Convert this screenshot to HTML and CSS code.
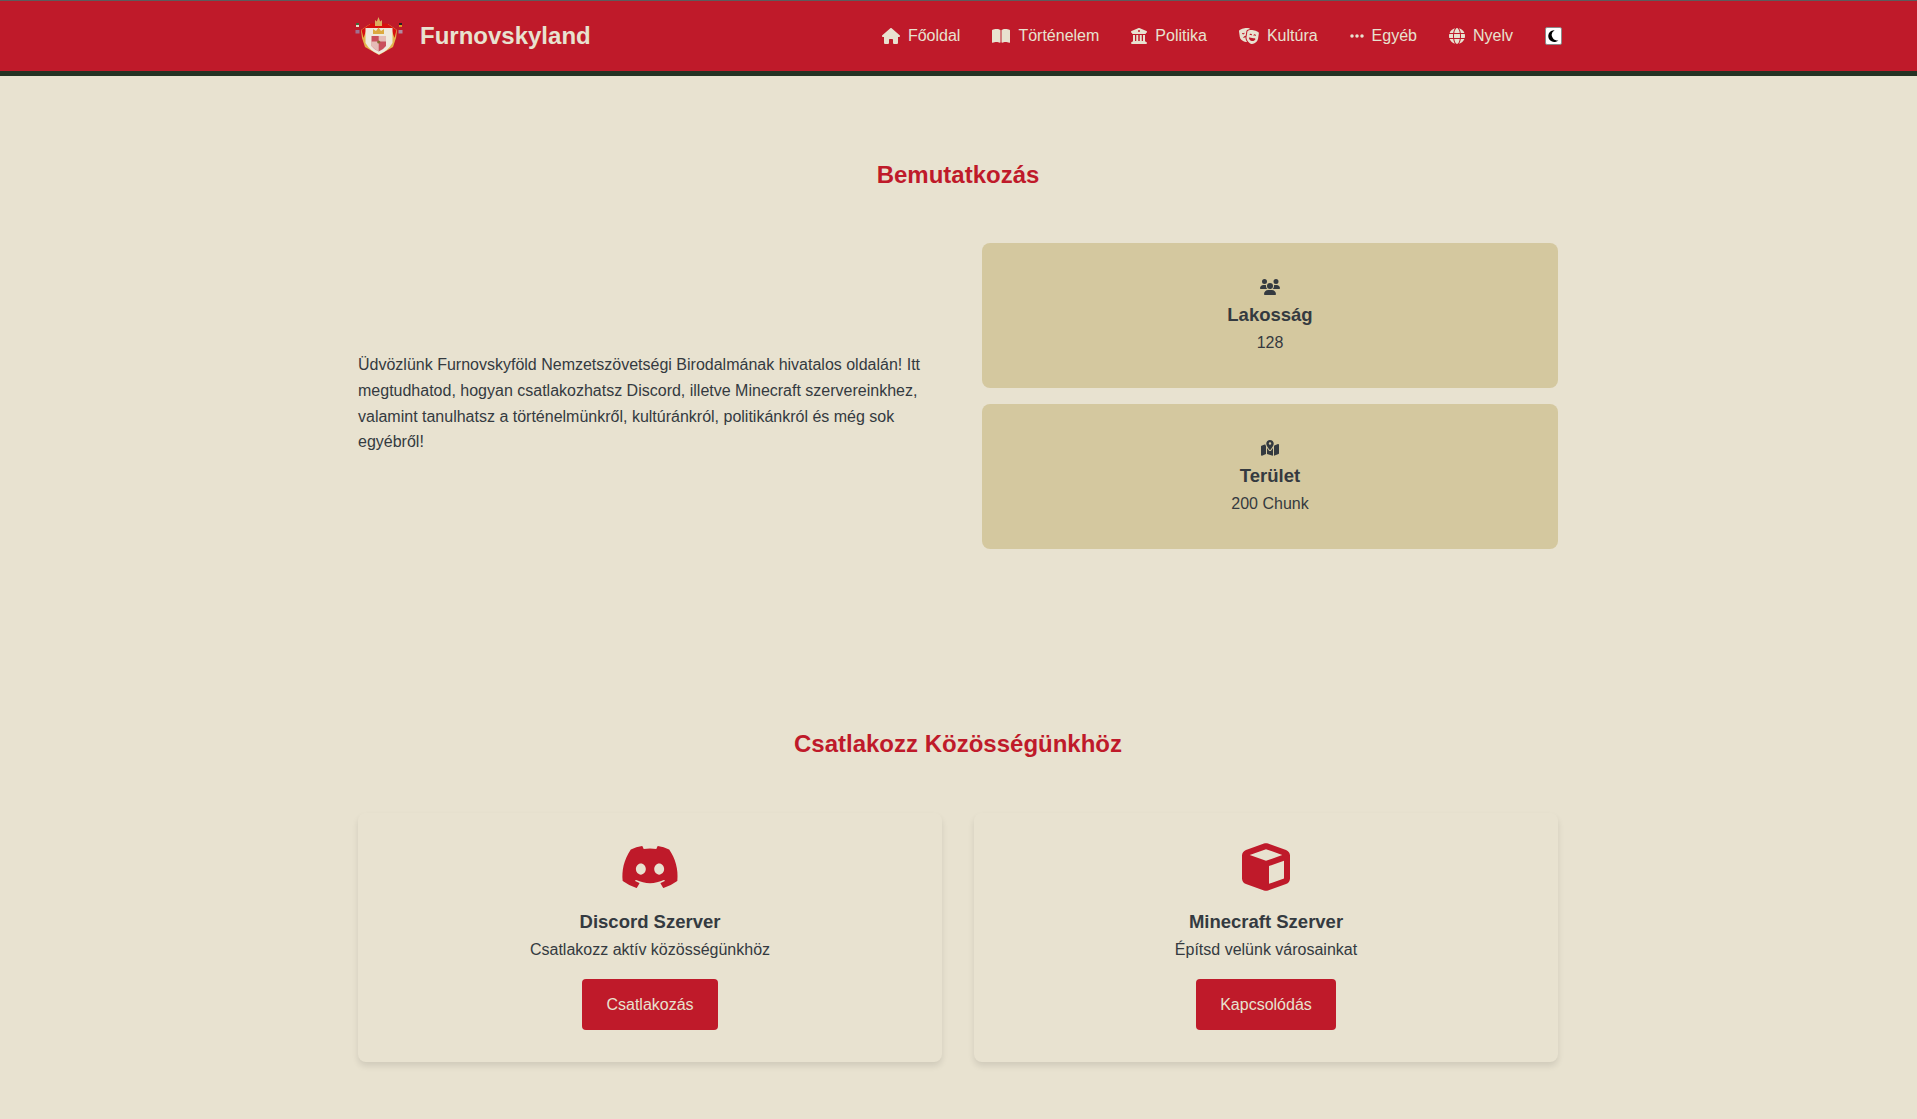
FILE: index.html
```html
<!DOCTYPE html>
<html lang="hu">
<head>
	<meta charset="UTF-8">
	<meta name="viewport" content="width=device-width, initial-scale=1.0">
	<title>Furnovskyland</title>
	<link rel="stylesheet" href="styles.css">
</head>
<body>
	<header class="site-header">
		<div class="header-inner">
			<a class="brand" href="#">
				<svg class="brand-logo" viewBox="0 0 48 38">
					<rect x="1" y="6" width="3" height="2" fill="#3f6b3c"/>
					<rect x="1" y="8" width="3" height="2" fill="#e8dcc8"/>
					<rect x="0.5" y="13" width="4" height="3.5" fill="#a07090"/>
					<rect x="44" y="6" width="3" height="2" fill="#222"/>
					<rect x="44" y="8" width="3" height="2" fill="#e09a20"/>
					<rect x="43.5" y="13" width="4" height="3.5" fill="#b08aa0"/>
					<path d="M6 13 L15 7 H33 L42 13 L41 21 L38 30 L31 34 L24 38 L17 34 L10 30 L7 21 Z" fill="#e3b44a"/>
					<path d="M6.5 13 L16 6.5 H32 L41.5 13 L39.5 21 L37 14 L11 14 L8.5 21 Z" fill="#d8100f"/>
					<path d="M10.5 11 H37.5 V26 Q33 34 24 37.5 Q15 34 10.5 26 Z" fill="#efe9dd"/>
					<path d="M20 3 L21.8 4.5 L23.5 0 L25.2 4.5 L27 3 L27 9 H20 Z" fill="#dcb060"/>
					<path d="M18 12 L21 14 L23.5 10.5 L26 14 L29 12 V17 H18 Z" fill="#dcaa40"/>
					<path d="M16.5 19 H31 V29 Q28 33 23.7 34.5 Q19.5 33 16.5 29 Z" fill="#c9505c"/>
					<path d="M23.7 19 H31 V24.5 H16.5 V29 Q20 33 23.7 34.5 Z" fill="#efe9dd" opacity="0.7"/>
					<circle cx="23.7" cy="25" r="1.6" fill="#8a6a30"/>
				</svg>
				<span class="brand-name">Furnovskyland</span>
			</a>
			<nav class="main-nav">
				<a href="#"><svg viewBox="0 0 576 512" class="nav-icon"><path d="M575.8 255.5c0 18-15 32.1-32 32.1h-32l.7 160.2c0 2.7-.2 5.4-.5 8.1V472c0 22.1-17.9 40-40 40H456c-1.1 0-2.2 0-3.3-.1c-1.4 .1-2.8 .1-4.2 .1H416 392c-22.1 0-40-17.9-40-40V448 384c0-17.7-14.3-32-32-32H256c-17.7 0-32 14.3-32 32v64 24c0 22.1-17.9 40-40 40H160 128.1c-1.5 0-3-.1-4.5-.2c-1.2 .1-2.4 .2-3.6 .2H104c-22.1 0-40-17.9-40-40V360c0-.9 0-1.9 .1-2.8V287.6H32c-18 0-32-14-32-32.1c0-9 3-17 10-24L266.4 8c7-7 15-8 22-8s15 2 21 7L564.8 231.5c8 7 12 15 11 24z"/></svg>Főoldal</a>
				<a href="#"><svg viewBox="0 0 576 512" class="nav-icon"><path d="M249.6 471.5c10.8 3.8 22.4-4.1 22.4-15.5V78.6c0-4.2-1.6-8.4-5-11C247.4 52 202.4 32 144 32C93.5 32 46.3 45.3 18.1 56.1C6.8 60.5 0 71.7 0 83.8V454.1c0 11.9 12.8 20.2 24.1 16.5C55.6 460.1 105.5 448 144 448c33.9 0 79 14 105.6 23.5zm76.8 0C353 462 398.1 448 432 448c38.5 0 88.4 12.1 119.9 22.6c11.3 3.8 24.1-4.6 24.1-16.5V83.8c0-12.1-6.8-23.3-18.1-27.6C529.7 45.3 482.5 32 432 32c-58.4 0-103.4 20-123 35.6c-3.3 2.6-5 6.8-5 11V456c0 11.4 11.7 19.3 22.4 15.5z"/></svg>Történelem</a>
				<a href="#"><svg viewBox="0 0 512 512" class="nav-icon"><path d="M243.4 2.6l-224 96c-14 6-21.8 21-18.7 35.8S16.8 160 32 160v8c0 13.3 10.7 24 24 24H456c13.3 0 24-10.7 24-24v-8c15.2 0 28.3-10.7 31.3-25.6s-4.8-29.9-18.7-35.8l-224-96c-8-3.4-17.2-3.4-25.2 0zM128 224H64V420.3c-.6 .3-1.2 .7-1.8 1.1l-48 32c-11.7 7.8-17 22.4-12.9 35.9S17.9 512 32 512H480c14.1 0 26.5-9.2 30.6-22.7s-1.1-28.1-12.9-35.9l-48-32c-.6-.4-1.2-.7-1.8-1.1V224H384V416H344V224H280V416H232V224H168V416H128V224zM256 64a32 32 0 1 1 0 64 32 32 0 1 1 0-64z"/></svg>Politika</a>
				<a href="#"><svg viewBox="0 0 640 512" class="nav-icon"><path d="M74.6 373.2c41.7 36.1 108 82.5 166.1 73.7c6.1-.9 12.1-2.5 18-4.5c-9.2-12.3-17.3-24.4-24.2-35.4c-21.9-35-28.8-75.2-25.9-113.6c-20.6 4.1-39.2 13-54.7 25.4c-6.5 5.2-16.3 1.3-14.8-7c6.4-33.5 33-60.9 68.2-66.3c2.6-.4 5.3-.7 7.9-.8l19.4-131.3c2-13.8 8-32.7 25-45.9C278.2 53.2 310.5 37 363.2 32.2c-.8-.7-1.6-1.4-2.4-2.1C340.6 14.5 288.4-11.5 175.7 5.6S20.5 63 5.7 83.9C0 91.9-.8 102 .6 111.8L24.8 276.1c5.5 37.3 21.5 72.6 49.8 97.2zm87.7-219.6c4.4-3.1 10.8-2 11.8 3.3c.1 .5 .2 1.1 .3 1.6c3.2 21.8-11.6 42-33.1 45.3s-41.5-11.8-44.7-33.5c-.1-.5-.1-1.1-.2-1.6c-.6-5.4 5.2-8.4 10.3-6.7c9 3 18.8 3.9 28.7 2.4s19.1-5.3 26.8-10.8zM261.6 390c29.4 46.9 79.5 110.9 137.6 119.7s124.5-37.5 162.2-72.7c27.6-25.8 43.8-60.8 49.2-97.9l24.2-164.3c1.4-9.8 .6-19.9-5.1-27.9c-14.8-20.9-57.3-61.2-170-78.3S299.4 77.2 279.2 92.8c-7.8 6-11.5 15.4-12.9 25.2L242.1 282.3c-5.5 37-.4 75.8 19.6 107.7zM404.5 235.3c-7.7-5.5-16.8-9.3-26.8-10.8s-19.8-.6-28.7 2.4c-5.1 1.7-10.9-1.3-10.3-6.7c.1-.5 .1-1.1 .2-1.6c3.2-21.8 23.2-36.8 44.7-33.5s36.3 23.5 33.1 45.3c-.1 .5-.2 1.1-.3 1.6c-1 5.3-7.4 6.4-11.8 3.3zm136.2 15.5c-1 5.3-7.4 6.4-11.8 3.3c-7.7-5.5-16.8-9.3-26.8-10.8s-19.8-.6-28.7 2.4c-5.1 1.7-10.9-1.3-10.3-6.7c.1-.5 .1-1.1 .2-1.6c3.2-21.8 23.2-36.8 44.7-33.5s36.3 23.5 33.1 45.3c-.1 .5-.2 1.1-.3 1.6zM530 350.1c-19.6 44.7-66.8 72.5-116.8 64.9s-87.1-47.7-96.9-95.4c-2-9.7 8.2-16.8 17.9-14.8c25.7 5.3 57.7 10.3 84.4 14.4s59.2 8.9 84.6 10.7c9.8 .7 18.8 8.4 14.8 17.2z"/></svg>Kultúra</a>
				<a href="#"><svg viewBox="0 0 448 512" class="nav-icon"><path d="M8 256a56 56 0 1 1 112 0A56 56 0 1 1 8 256zm160 0a56 56 0 1 1 112 0 56 56 0 1 1 -112 0zm216-56a56 56 0 1 1 0 112 56 56 0 1 1 0-112z"/></svg>Egyéb</a>
				<a href="#"><svg viewBox="0 0 512 512" class="nav-icon"><path d="M352 256c0 22.2-1.2 43.6-3.3 64H163.3c-2.2-20.4-3.3-41.8-3.3-64s1.2-43.6 3.3-64H348.7c2.2 20.4 3.3 41.8 3.3 64zm28.8-64H503.9c5.3 20.5 8.1 41.9 8.1 64s-2.8 43.5-8.1 64H380.8c2.1-20.6 3.2-42 3.2-64s-1.1-43.4-3.2-64zm112.6-32H376.7c-10-63.9-29.8-117.4-55.3-151.6c78.3 20.7 142 77.5 172.1 151.6zm-149.1 0H167.7c6.1-36.4 15.5-68.6 27-94.7c10.5-23.6 22.2-40.7 33.5-51.5C239.4 3.2 248.7 0 256 0s16.6 3.2 27.8 13.8c11.3 10.8 23 27.9 33.5 51.5c11.6 26 20.9 58.2 27 94.7zm-209 0H18.6C48.6 85.9 112.2 29.1 190.6 8.4C165.1 42.6 145.3 96.1 135.3 160zM8.1 192H131.2c-2.1 20.6-3.2 42-3.2 64s1.1 43.4 3.2 64H8.1C2.8 299.5 0 278.1 0 256s2.8-43.5 8.1-64zM194.7 446.6c-11.6-26-20.9-58.2-27-94.6H344.3c-6.1 36.4-15.5 68.6-27 94.6c-10.5 23.6-22.2 40.7-33.5 51.5C272.6 508.8 263.3 512 256 512s-16.6-3.2-27.8-13.8c-11.3-10.8-23-27.9-33.5-51.5zM135.3 352c10 63.9 29.8 117.4 55.3 151.6C112.2 482.9 48.6 426.1 18.6 352H135.3zm358.1 0c-30 74.1-93.6 130.9-171.9 151.6c25.5-34.2 45.2-87.7 55.3-151.6H493.4z"/></svg>Nyelv</a>
				<span class="theme-toggle"><svg viewBox="0 0 15 16"><path d="M8.6 2.2 A5.9 5.9 0 1 0 12.4 12.2 A5.4 5.4 0 0 1 8.6 2.2 Z" fill="#000"/></svg></span>
			</nav>
		</div>
	</header>

	<main class="container">
		<section class="intro">
			<h2 class="section-title">Bemutatkozás</h2>
			<div class="intro-grid">
				<p class="intro-text">Üdvözlünk Furnovskyföld Nemzetszövetségi Birodalmának hivatalos oldalán! Itt megtudhatod, hogyan csatlakozhatsz Discord, illetve Minecraft szervereinkhez, valamint tanulhatsz a történelmünkről, kultúránkról, politikánkról és még sok egyébről!</p>
				<div class="stats">
					<div class="stat-card">
						<svg viewBox="0 0 640 512" class="stat-icon"><path d="M144 0a80 80 0 1 1 0 160A80 80 0 1 1 144 0zM512 0a80 80 0 1 1 0 160A80 80 0 1 1 512 0zM0 298.7C0 239.8 47.8 192 106.7 192h42.7c15.9 0 31 3.5 44.6 9.7c-1.3 7.2-1.9 14.7-1.9 22.3c0 38.2 16.8 72.5 43.3 96c-.2 0-.4 0-.7 0H21.3C9.6 320 0 310.4 0 298.7zM405.3 320c-.2 0-.4 0-.7 0c26.6-23.5 43.3-57.8 43.3-96c0-7.6-.7-15-1.9-22.3c13.6-6.3 28.7-9.7 44.6-9.7h42.7C592.2 192 640 239.8 640 298.7c0 11.8-9.6 21.3-21.3 21.3H405.3zM224 224a96 96 0 1 1 192 0 96 96 0 1 1 -192 0zM128 485.3C128 411.7 187.7 352 261.3 352H378.7C452.3 352 512 411.7 512 485.3c0 14.7-11.9 26.7-26.7 26.7H154.7c-14.7 0-26.7-11.9-26.7-26.7z"/></svg>
						<h3>Lakosság</h3>
						<p>128</p>
					</div>
					<div class="stat-card">
						<svg viewBox="0 0 576 512" class="stat-icon"><path d="M408 120c0 54.6-73.1 151.9-105.2 192c-7.7 9.6-22 9.6-29.6 0C241.1 271.9 168 174.6 168 120C168 53.7 221.7 0 288 0s120 53.7 120 120zm8 80.4c3.5-6.9 6.7-13.8 9.6-20.6c.5-1.2 1-2.5 1.5-3.7l116-46.4C558.9 123.4 576 135 576 152V422.8c0 9.8-6 18.6-15.1 22.3L416 503V200.4zM137.6 138.3c2.4 14.1 7.2 28.3 12.8 41.5c2.9 6.8 6.1 13.7 9.6 20.6V451.8L32.9 502.7C17.1 509 0 497.4 0 480.4V209.6c0-9.8 6-18.6 15.1-22.3l122.6-49zM327.8 332c13.9-17.4 35.7-45.7 56.2-77V504.3L192 449.4V255c20.5 31.3 42.3 59.6 56.2 77c20.5 25.6 59.1 25.6 79.6 0zM288 152a40 40 0 1 0 0-80 40 40 0 1 0 0 80z"/></svg>
						<h3>Terület</h3>
						<p>200 Chunk</p>
					</div>
				</div>
			</div>
		</section>

		<section class="join">
			<h2 class="section-title">Csatlakozz Közösségünkhöz</h2>
			<div class="join-grid">
				<div class="join-card">
					<svg viewBox="0 0 640 512" class="join-icon"><path d="M524.531,69.836a1.5,1.5,0,0,0-.764-.7A485.065,485.065,0,0,0,404.081,32.03a1.816,1.816,0,0,0-1.923.91,337.461,337.461,0,0,0-14.9,30.6,447.848,447.848,0,0,0-134.426,0,309.541,309.541,0,0,0-15.135-30.6,1.89,1.89,0,0,0-1.924-.91A483.689,483.689,0,0,0,116.085,69.137a1.712,1.712,0,0,0-.788.676C39.068,183.651,18.186,294.69,28.43,404.354a2.016,2.016,0,0,0,.765,1.375A487.666,487.666,0,0,0,176.02,479.918a1.9,1.9,0,0,0,2.063-.676A348.2,348.2,0,0,0,208.12,430.4a1.86,1.86,0,0,0-1.019-2.588,321.173,321.173,0,0,1-45.868-21.853,1.885,1.885,0,0,1-.185-3.126c3.082-2.309,6.166-4.711,9.109-7.137a1.819,1.819,0,0,1,1.9-.256c96.229,43.917,200.41,43.917,295.5,0a1.812,1.812,0,0,1,1.924.233c2.944,2.426,6.027,4.851,9.132,7.16a1.884,1.884,0,0,1-.162,3.126,301.407,301.407,0,0,1-45.89,21.83,1.875,1.875,0,0,0-1,2.611,391.055,391.055,0,0,0,30.014,48.815,1.864,1.864,0,0,0,2.063.7A486.048,486.048,0,0,0,610.7,405.729a1.882,1.882,0,0,0,.765-1.352C623.729,277.594,590.933,167.465,524.531,69.836ZM222.491,337.58c-28.972,0-52.844-26.587-52.844-59.239S193.056,219.1,222.491,219.1c29.665,0,53.306,26.82,52.843,59.239C275.334,310.993,251.924,337.58,222.491,337.58Zm195.38,0c-28.971,0-52.843-26.587-52.843-59.239S388.437,219.1,417.871,219.1c29.667,0,53.307,26.82,52.844,59.239C470.715,310.993,447.538,337.58,417.871,337.58Z"/></svg>
					<h3>Discord Szerver</h3>
					<p>Csatlakozz aktív közösségünkhöz</p>
					<a class="btn" href="#">Csatlakozás</a>
				</div>
				<div class="join-card">
					<svg viewBox="0 0 512 512" class="join-icon"><path d="M234.5 5.7c13.9-5 29.1-5 43.1 0l192 68.6C495 83.4 512 107.5 512 134.6V377.4c0 27-17 51.2-42.5 60.3l-192 68.6c-13.9 5-29.1 5-43.1 0l-192-68.6C17 428.6 0 404.5 0 377.4V134.6c0-27 17-51.2 42.5-60.3l192-68.6zM256 66L82.3 128 256 190l173.7-62L256 66zm32 368.6l160-57.1v-188L288 246.6V434.6z"/></svg>
					<h3>Minecraft Szerver</h3>
					<p>Építsd velünk városainkat</p>
					<a class="btn" href="#">Kapcsolódás</a>
				</div>
			</div>
		</section>
	</main>
</body>
</html>
```

FILE: styles.css
```css
* {
	box-sizing: border-box;
}
body {
	margin: 0;
	padding-right: 1px;
	background: #e8e2d0;
	color: #343a40;
	font-family: "Liberation Sans", Arial, sans-serif;
	font-size: 16px;
	line-height: 1.6;
}
a {
	color: inherit;
	text-decoration: none;
}
.site-header {
	height: 76px;
	margin-right: -1px;
	padding-right: 1px;
	background: #bf1a2a;
	border-top: 1px solid #5c5c5c;
	border-bottom: 5px solid #243324;
	color: #e8e2d0;
}
.header-inner {
	width: 1200px;
	height: 100%;
	margin: 0 auto;
	display: flex;
	align-items: center;
	justify-content: space-between;
}
.brand {
	display: flex;
	align-items: center;
	gap: 17px;
	margin-left: -3px;
}
.brand-logo {
	width: 48px;
	height: 38px;
}
.brand-name {
	font-size: 24px;
	font-weight: bold;
}
.main-nav {
	display: flex;
	align-items: center;
	gap: 32px;
	margin-right: -4px;
}
.main-nav a {
	display: flex;
	align-items: center;
	gap: 8px;
}
.nav-icon {
	height: 16px;
	fill: #e8e2d0;
}
.theme-toggle {
	display: flex;
	width: 17px;
	height: 18px;
	background: #fff;
	border: 1px solid #8a8a8a;
	border-radius: 2px;
}
.theme-toggle svg {
	width: 100%;
	height: 100%;
}
.container {
	width: 1200px;
	margin: 0 auto;
}
.section-title {
	margin: 0;
	color: #bf1a2a;
	font-size: 24px;
	line-height: 38px;
	text-align: center;
}
.intro {
	padding-top: 80px;
}
.intro-grid {
	display: grid;
	grid-template-columns: 1fr 1fr;
	gap: 48px;
	align-items: center;
	margin-top: 49px;
}
.intro-text {
	margin: 15px 0 0;
}
.stats {
	display: flex;
	flex-direction: column;
	gap: 16px;
}
.stat-card {
	height: 145px;
	padding-top: 36px;
	background: #d4c89f;
	border-radius: 8px;
	text-align: center;
}
.stat-icon {
	display: block;
	height: 16px;
	margin: 0 auto;
	fill: #343a40;
}
.stat-card h3 {
	margin: 4px 0 0;
	font-size: 18.5px;
	line-height: 31px;
}
.stat-card p {
	margin: 0;
}
.join {
	padding-top: 176px;
	padding-bottom: 48px;
}
.join-grid {
	display: grid;
	grid-template-columns: 1fr 1fr;
	gap: 32px;
	margin-top: 50px;
}
.join-card {
	padding: 30px 32px 32px;
	border-radius: 8px;
	box-shadow: 0 4px 6px rgba(0, 0, 0, 0.1);
	text-align: center;
}
.join-icon {
	display: block;
	height: 48px;
	margin: 0 auto;
	fill: #bf1a2a;
}
.join-card h3 {
	margin: 15px 0 0;
	font-size: 18.5px;
	line-height: 31px;
}
.join-card p {
	margin: 0 0 16px;
}
.btn {
	display: inline-block;
	padding: 13px 24px;
	background: #bf1a2a;
	border-radius: 4px;
	color: #e8e2d0;
	vertical-align: top;
}
```
